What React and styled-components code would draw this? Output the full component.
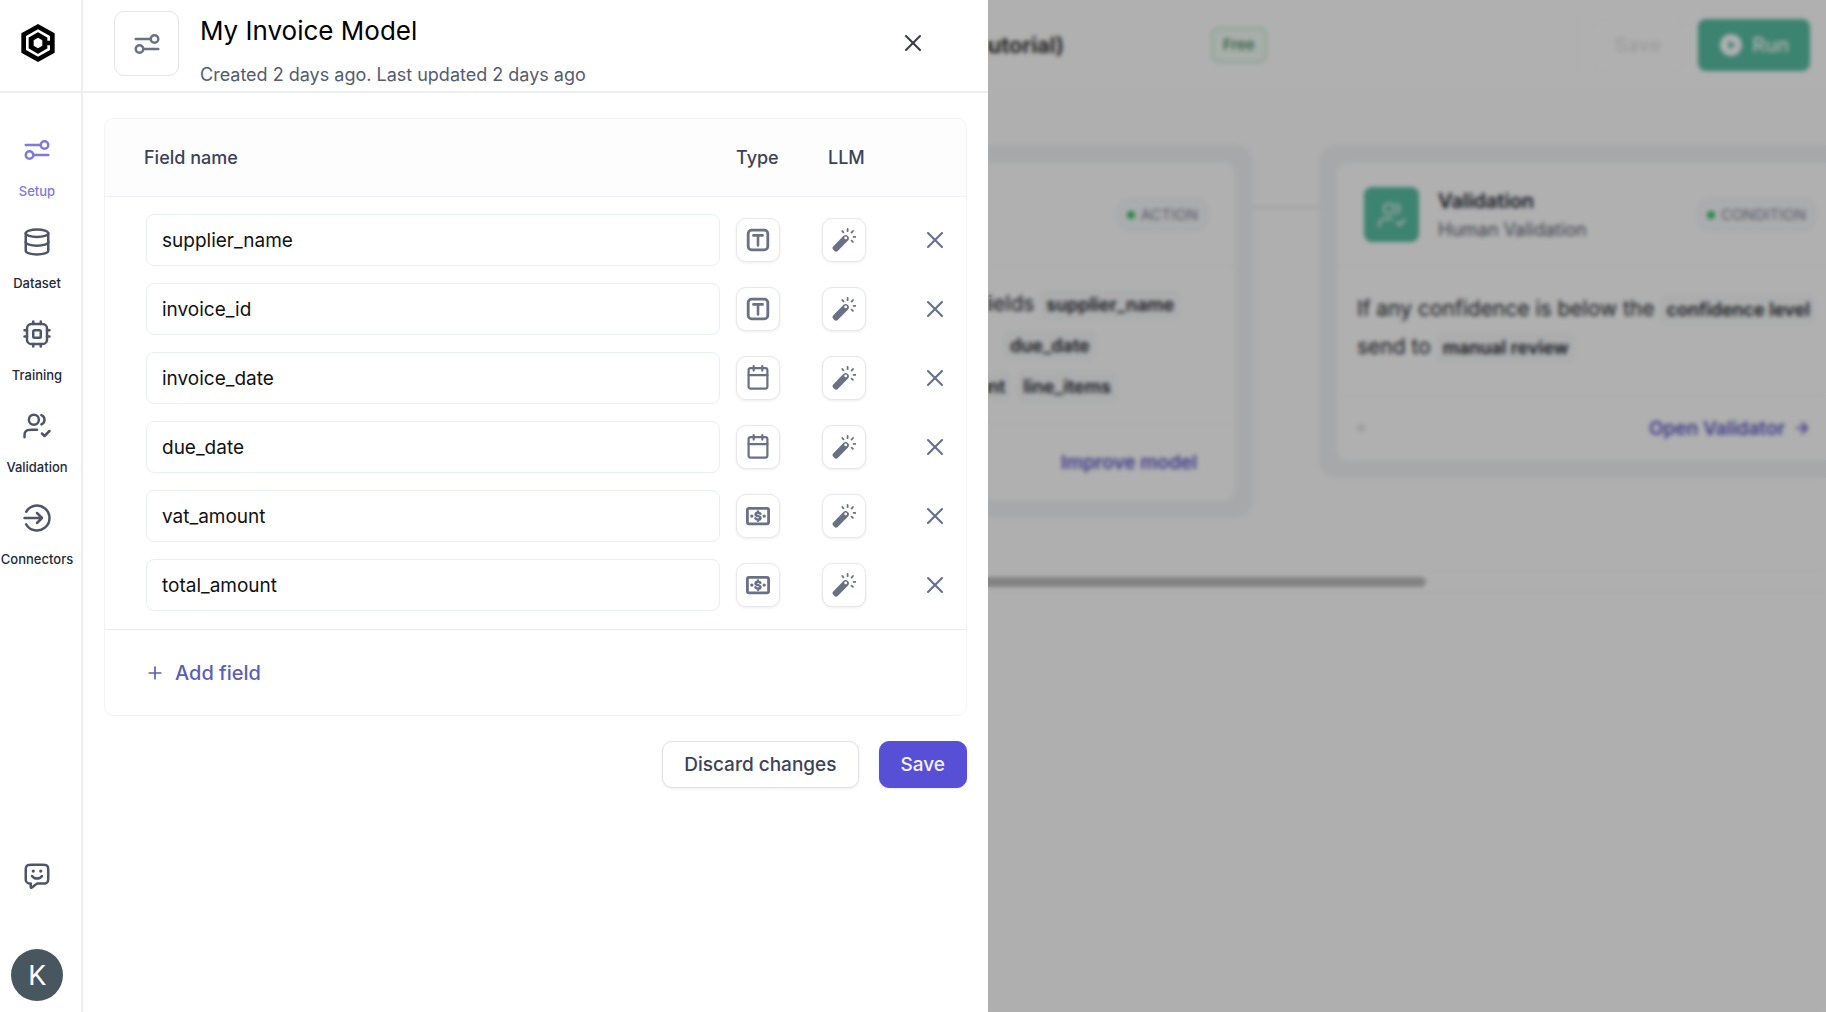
import { useState } from "react";
import styled, { createGlobalStyle } from "styled-components";
import { X, Plus, ArrowRight } from "lucide-react";

const NAV_ITEMS = [
  { label: "Setup", icon: "sliders", active: true },
  { label: "Dataset", icon: "database" },
  { label: "Training", icon: "chip" },
  { label: "Validation", icon: "users" },
  { label: "Connectors", icon: "login" },
];

const FIELDS = [
  { name: "supplier_name", type: "text" },
  { name: "invoice_id", type: "text" },
  { name: "invoice_date", type: "date" },
  { name: "due_date", type: "date" },
  { name: "vat_amount", type: "money" },
  { name: "total_amount", type: "money" },
];

const LINE_ICONS = {
  sliders: (
    <>
      <path d="M3 8h12M9 16h12" />
      <circle cx="18" cy="8" r="3" />
      <circle cx="6" cy="16" r="3" />
    </>
  ),
  database: (
    <>
      <ellipse cx="12" cy="5" rx="9" ry="3" />
      <path d="M3 5v14c0 1.66 4 3 9 3s9-1.34 9-3V5" />
      <path d="M21 12c0 1.66-4 3-9 3s-9-1.34-9-3" />
    </>
  ),
  chip: (
    <>
      <rect x="4" y="4" width="16" height="16" rx="3.5" />
      <rect x="9" y="9" width="6" height="6" rx="1" />
      <path d="M9 2v2M15 2v2M9 20v2M15 20v2M20 9h2M20 14h2M2 9h2M2 14h2" />
    </>
  ),
  users: (
    <>
      <path d="M16 18l2 2 4-4" />
      <path d="M12 15H8c-1.86 0-2.8 0-3.53.3a4 4 0 0 0-2.17 2.17C2 18.2 2 19.14 2 21" />
      <path d="M15.5 3.29a4 4 0 0 1 0 7.42" />
      <circle cx="9.5" cy="7" r="4" />
    </>
  ),
  login: (
    <>
      <path d="M12 8l4 4-4 4M16 12H2" />
      <path d="M3.34 7a10 10 0 1 1 0 10" />
    </>
  ),
  feedback: (
    <>
      <path d="M7 18v2.34c0 .53 0 .8.11.93.1.12.24.19.39.19.18 0 .38-.17.8-.5l2.39-1.9c.48-.4.73-.6 1-.73.24-.13.5-.22.76-.27.3-.06.61-.06 1.23-.06h2.52c1.68 0 2.52 0 3.16-.33a3 3 0 0 0 1.31-1.31c.33-.64.33-1.48.33-3.16V7.8c0-1.68 0-2.52-.33-3.16a3 3 0 0 0-1.31-1.31C18.72 3 17.88 3 16.2 3H7.8c-1.68 0-2.52 0-3.16.33a3 3 0 0 0-1.31 1.31C3 5.28 3 6.12 3 7.8V14c0 .93 0 1.4.1 1.78a3 3 0 0 0 2.12 2.12c.38.1.85.1 1.78.1z" />
      <path d="M8 12s1.3 2 4 2 4-2 4-2" />
      <path d="M9 8h.01M15 8h.01" strokeWidth="2.6" />
    </>
  ),
};

const LineIcon = ({ name, size = 30 }) => (
  <svg
    width={size}
    height={size}
    viewBox="0 0 24 24"
    fill="none"
    stroke="currentColor"
    strokeWidth="2"
    strokeLinecap="round"
    strokeLinejoin="round"
    aria-hidden="true"
  >
    {LINE_ICONS[name]}
  </svg>
);

const TYPE_ICONS = {
  text: (
    <>
      <rect x="4.2" y="4.2" width="19.6" height="19.6" rx="3.4" strokeWidth="2.8" />
      <path d="M9.4 9.4h9.2M14 9.4v10" strokeWidth="2.6" />
    </>
  ),
  date: (
    <>
      <rect x="4.6" y="4.2" width="18.8" height="20.4" rx="2" strokeWidth="2.2" />
      <path d="M4.6 11.2h18.8M9.7 2.2v4.4M18.3 2.2v4.4" strokeWidth="2.2" />
    </>
  ),
  money: (
    <>
      <rect x="3.4" y="6.4" width="21.2" height="15.4" rx="1.6" strokeWidth="2.8" />
      <path
        d="M16.4 11.7c-.5-.7-1.4-1-2.4-1-1.4 0-2.4.6-2.4 1.7 0 2.4 4.9 1.100 4.9 3.500 0 1.100-1.100 1.700-2.500 1.700-1.100 0-2.100-.4-2.600-1.200M14 9.600v1.100M14 17.600v1.100"
        strokeWidth="2.5"
      />
      <path d="M7.800 14.100h.01M20.200 14.100h.01" strokeWidth="3.400" />
    </>
  ),
};

const TypeIcon = ({ type }) => (
  <svg
    width="28"
    height="28"
    viewBox="0 0 28 28"
    fill="none"
    stroke="currentColor"
    strokeLinecap="round"
    strokeLinejoin="round"
    aria-hidden="true"
  >
    {TYPE_ICONS[type]}
  </svg>
);

const WandIcon = () => (
  <svg width="24" height="24" viewBox="0 0 24 24" fill="none" aria-hidden="true">
    <path
      d="M1.200 18.500L11.600 7.700a3.300 3.300 0 0 1 4.700 4.500L5.700 23a2.400 2.400 0 0 1-3.300-.1l-1.100-1.100a2.400 2.400 0 0 1-.1-3.300z"
      fill="currentColor"
    />
    <circle cx="13.700" cy="9.900" r="1.400" fill="white" />
    <path
      d="M15.600 1v2.200M10.300 3l1.100 1.400M21 3l-1.400 1.600M21.600 8.900h1.800M19.600 12.600l1.300 1.200"
      stroke="currentColor"
      strokeWidth="1.800"
      strokeLinecap="round"
    />
  </svg>
);

const Logo = () => (
  <svg width="34" height="38" viewBox="0 0 100 114" aria-hidden="true">
    <path d="M50 0l50 28v58l-50 28L0 86V28z" fill="black" />
    <path
      d="M82 50V38.500L50 20 18 38.500v37L50 94l32-18.500V64"
      fill="none"
      stroke="white"
      strokeWidth="8"
    />
    <path d="M50 41l13 8v16l-13 8-13-8V49z" fill="white" />
  </svg>
);

const PlayIcon = () => (
  <svg width="24" height="24" viewBox="0 0 24 24" aria-hidden="true">
    <circle cx="12" cy="12" r="11" fill="white" />
    <path d="M9.500 7.500l7 4.500-7 4.500z" fill="#58bea2" />
  </svg>
);

const Sidebar = () => (
  <Aside>
    <LogoLink href="#" aria-label="Home">
      <Logo />
    </LogoLink>
    <Nav>
      {NAV_ITEMS.map((item) => (
        <NavLink key={item.label} href="#" $active={item.active}>
          <LineIcon name={item.icon} />
          <span>{item.label}</span>
        </NavLink>
      ))}
    </Nav>
    <SidebarFooter>
      <GhostButton aria-label="Send feedback">
        <LineIcon name="feedback" />
      </GhostButton>
      <Avatar aria-label="Account">K</Avatar>
    </SidebarFooter>
  </Aside>
);

const FieldRow = ({ field, onRename, onRemove }) => (
  <tr>
    <td>
      <FieldInput
        aria-label="Field name"
        value={field.name}
        onChange={(e) => onRename(e.target.value)}
      />
    </td>
    <td>
      <TileButton aria-label={`Type: ${field.type}`}>
        <TypeIcon type={field.type} />
      </TileButton>
    </td>
    <td>
      <TileButton aria-label="LLM prompt">
        <WandIcon />
      </TileButton>
    </td>
    <td>
      <RemoveButton aria-label="Remove field" onClick={onRemove}>
        <X size={28} strokeWidth={1.8} />
      </RemoveButton>
    </td>
  </tr>
);

const ModelDrawer = () => {
  const [fields, setFields] = useState(FIELDS);

  const rename = (index, name) =>
    setFields(fields.map((f, i) => (i === index ? { ...f, name } : f)));
  const remove = (index) => setFields(fields.filter((_, i) => i !== index));
  const add = () => setFields([...fields, { name: "", type: "text" }]);

  return (
    <Drawer>
      <DrawerHeader>
        <HeaderTile>
          <LineIcon name="sliders" />
        </HeaderTile>
        <HeaderText>
          <h1>My Invoice Model</h1>
          <p>Created 2 days ago. Last updated 2 days ago</p>
        </HeaderText>
        <CloseButton aria-label="Close">
          <X size={28} strokeWidth={1.8} />
        </CloseButton>
      </DrawerHeader>
      <DrawerBody>
        <TableCard>
          <FieldTable>
            <colgroup>
              <col />
              <col width="86" />
              <col width="84" />
              <col width="60" />
            </colgroup>
            <thead>
              <tr>
                <th>Field name</th>
                <th>Type</th>
                <th>LLM</th>
                <th aria-label="Remove" />
              </tr>
            </thead>
            <tbody>
              {fields.map((field, i) => (
                <FieldRow
                  key={i}
                  field={field}
                  onRename={(name) => rename(i, name)}
                  onRemove={() => remove(i)}
                />
              ))}
            </tbody>
          </FieldTable>
          <TableFooter>
            <AddButton onClick={add}>
              <Plus size={20} strokeWidth={2} />
              Add field
            </AddButton>
          </TableFooter>
        </TableCard>
        <Actions>
          <Button onClick={() => setFields(FIELDS)}>Discard changes</Button>
          <Button $primary>Save</Button>
        </Actions>
      </DrawerBody>
    </Drawer>
  );
};

const Workspace = () => (
  <Main>
    <TopBar>
      <ProjectName>utorial)</ProjectName>
      <FreeBadge>Free</FreeBadge>
      <Spacer />
      <Divider />
      <SaveButton disabled>Save</SaveButton>
      <RunButton>
        <PlayIcon />
        Run
      </RunButton>
    </TopBar>
    <Canvas>
      <StepFrame $tail>
        <StepCard $tail>
          <StepHeader>
            <StatusBadge>ACTION</StatusBadge>
          </StepHeader>
          <StepBody $tail>
            <Line>
              ields <Chip>supplier_name</Chip>
            </Line>
            <Line $indent>
              <Chip>due_date</Chip>
            </Line>
            <Line>
              <Chip $tail>nt</Chip> <Chip>line_items</Chip>
            </Line>
          </StepBody>
          <StepFooter $tail>
            <StepLink href="#">Improve model</StepLink>
          </StepFooter>
        </StepCard>
      </StepFrame>
      <Connector />
      <StepFrame>
        <StepCard>
          <StepHeader>
            <StepTile>
              <LineIcon name="users" />
            </StepTile>
            <StepTitle>
              <h2>Validation</h2>
              <p>Human Validation</p>
            </StepTitle>
            <StatusBadge>CONDITION</StatusBadge>
          </StepHeader>
          <StepBody>
            <Line>
              If any confidence is below the <Chip>confidence level</Chip>
            </Line>
            <Line>
              send to <Chip>manual review</Chip>
            </Line>
          </StepBody>
          <StepFooter>
            <IdleDot />
            <StepLink href="#">
              Open Validator
              <ArrowRight size={18} strokeWidth={2.4} />
            </StepLink>
          </StepFooter>
        </StepCard>
      </StepFrame>
    </Canvas>
    <ScrollTrack>
      <ScrollThumb />
    </ScrollTrack>
    <Backdrop />
  </Main>
);

const App = () => (
  <>
    <GlobalStyle />
    <Shell>
      <Sidebar />
      <ModelDrawer />
      <Workspace />
    </Shell>
  </>
);

const GlobalStyle = createGlobalStyle`
  * {
    box-sizing: border-box;
  }

  body {
    margin: 0;
    font-family: Inter, "Liberation Sans", sans-serif;
    color: #000;
    background: #fff;
  }

  h1, h2, p {
    margin: 0;
  }

  a {
    text-decoration: none;
  }

  button, input {
    font-family: inherit;
  }

  button {
    cursor: pointer;
  }

  svg {
    display: block;
    flex-shrink: 0;
  }
`;

const Shell = styled.div`
  display: flex;
  min-height: 100vh;
  overflow: hidden;
`;

const Aside = styled.aside`
  display: flex;
  flex-direction: column;
  flex: 0 0 83px;
  border-right: 2px solid #eceef1;
`;

const LogoLink = styled.a`
  display: flex;
  align-items: center;
  justify-content: center;
  height: 93px;
  padding: 0 6px 6px 0;
  border-bottom: 2px solid #eceef1;
`;

const Nav = styled.nav`
  display: flex;
  flex-direction: column;
  gap: 20px;
  padding: 42px 7px 0 0;
`;

const NavLink = styled.a`
  display: flex;
  flex-direction: column;
  align-items: center;
  gap: 18px;
  height: 72px;
  color: ${(props) => (props.$active ? "#8079dc" : "#4d5567")};

  span {
    color: ${(props) => (props.$active ? "#8079dc" : "#242a3a")};
    font-size: 13px;
    font-weight: 500;
    line-height: 16px;
  }
`;

const SidebarFooter = styled.div`
  display: flex;
  flex-direction: column;
  align-items: center;
  gap: 58px;
  margin-top: auto;
  padding: 0 7px 11px 0;
`;

const GhostButton = styled.button`
  display: flex;
  padding: 0;
  border: none;
  background: none;
  color: #4d5567;
`;

const Avatar = styled.button`
  width: 52px;
  height: 52px;
  padding: 0;
  border: none;
  border-radius: 50%;
  background: #48575f;
  color: #fff;
  font-family: Roboto, sans-serif;
  font-size: 28px;
`;

const Drawer = styled.section`
  flex: 0 1 905px;
  min-width: 0;
  background: #fff;
`;

const DrawerHeader = styled.header`
  display: flex;
  align-items: flex-start;
  height: 93px;
  padding: 11px 61px 0 31px;
  border-bottom: 2px solid #eceef1;
`;

const HeaderTile = styled.div`
  display: flex;
  align-items: center;
  justify-content: center;
  width: 65px;
  height: 65px;
  border: 1px solid #e4e6ea;
  border-radius: 10px;
  color: #6a7185;
`;

const HeaderText = styled.div`
  flex: 1;
  padding-left: 21px;

  h1 {
    font-size: 26px;
    font-weight: 400;
    line-height: 40px;
  }

  p {
    margin-top: 12px;
    color: #555b70;
    font-size: 18px;
    line-height: 24px;
  }
`;

const CloseButton = styled(GhostButton)`
  margin-top: 18px;
  color: #3c3f46;
`;

const DrawerBody = styled.div`
  padding: 25px 21px;
`;

const TableCard = styled.div`
  border: 1px solid #f0f2f5;
  border-radius: 10px;
  overflow: hidden;
`;

const FieldTable = styled.table`
  width: 100%;
  table-layout: fixed;
  border-collapse: separate;
  border-spacing: 0;

  th {
    height: 78px;
    padding: 0;
    border-bottom: 1px solid #eef0f4;
    background: #fdfdfe;
    color: #3c4356;
    font-size: 18px;
    font-weight: 500;
    text-align: left;
  }

  th:first-child {
    padding-left: 39px;
  }

  th:nth-child(3) {
    padding-left: 6px;
  }

  td {
    padding: 17px 0 0;
  }

  td:first-child {
    padding-left: 41px;
    padding-right: 16px;
  }

  tbody tr:last-child td {
    padding-bottom: 18px;
  }
`;

const FieldInput = styled.input`
  display: block;
  width: 100%;
  height: 52px;
  padding: 0 15px;
  border: 1px solid #eceef5;
  border-radius: 8px;
  color: #111;
  font-size: 19px;
`;

const TileButton = styled.button`
  display: flex;
  align-items: center;
  justify-content: center;
  width: 44px;
  height: 44px;
  padding: 0;
  border: 1px solid #e6e8ec;
  border-radius: 10px;
  background: #fff;
  box-shadow: 0 1px 3px rgba(16, 24, 40, 0.08);
  color: #6a7185;
`;

const RemoveButton = styled(GhostButton)`
  margin-left: 15px;
  color: #66708a;
`;

const TableFooter = styled.div`
  display: flex;
  align-items: center;
  height: 86px;
  padding-left: 40px;
  border-top: 1px solid #e9ecef;
`;

const AddButton = styled(GhostButton)`
  align-items: center;
  gap: 10px;
  color: #5a5fb3;
  font-size: 20px;
  font-weight: 500;
`;

const Actions = styled.div`
  display: flex;
  justify-content: flex-end;
  gap: 20px;
  padding-top: 25px;
`;

const Button = styled.button`
  height: 47px;
  padding: 0 21px;
  border: 1px solid ${(props) => (props.$primary ? "#5750d6" : "#dfe1e6")};
  border-radius: 10px;
  background: ${(props) => (props.$primary ? "#5750d6" : "#fff")};
  box-shadow: 0 1px 3px rgba(16, 24, 40, 0.08);
  color: ${(props) => (props.$primary ? "#f3f2ff" : "#3c4356")};
  font-size: 19px;
  font-weight: 500;
`;

const Main = styled.main`
  position: relative;
  flex: 1;
  min-width: 0;
  overflow: hidden;
  background: #fefefe;
`;

const Backdrop = styled.div`
  position: absolute;
  inset: 0;
  background: rgba(0, 0, 0, 0.31);
  backdrop-filter: blur(2px);
`;

const TopBar = styled.header`
  display: flex;
  align-items: center;
  height: 91px;
  padding-right: 16px;
  border-bottom: 1px solid #fafafa;
  background: #fff;
`;

const ProjectName = styled.div`
  width: 223px;
  color: #1c1c1c;
  font-size: 22px;
  font-weight: 600;
`;

const FreeBadge = styled.span`
  padding: 0 10px;
  border: 2px solid #cbeed8;
  border-radius: 8px;
  background: #f3fcf6;
  color: #3d8458;
  font-size: 15px;
  font-weight: 500;
  line-height: 32px;
`;

const Spacer = styled.div`
  flex: 1;
`;

const Divider = styled.div`
  width: 1px;
  height: 60px;
  margin-right: 15px;
  background: #fafafa;
`;

const SaveButton = styled.button`
  width: 90px;
  height: 52px;
  margin-right: 15px;
  border: 1px solid #fcfcfc;
  border-radius: 8px;
  background: #fff;
  color: #e2e3e5;
  font-size: 20px;
  font-weight: 500;
`;

const RunButton = styled.button`
  display: flex;
  align-items: center;
  gap: 9px;
  height: 52px;
  padding: 0 21px;
  border: none;
  border-radius: 8px;
  background: #58bea2;
  color: #fff;
  font-size: 20px;
  font-weight: 500;
`;

const Canvas = styled.div`
  display: flex;
  align-items: flex-start;
  width: max-content;
  padding-top: 54px;
`;

const StepFrame = styled.section`
  padding: ${(props) => (props.$tail ? "18px 18px 18px 0" : "18px")};
  border-radius: ${(props) => (props.$tail ? "0 16px 16px 0" : "16px")};
  background: #f1f4f7;
`;

const StepCard = styled.div`
  width: ${(props) => (props.$tail ? "247px" : "506px")};
  border-radius: ${(props) => (props.$tail ? "0 10px 10px 0" : "10px")};
  background: #fff;
`;

const StepHeader = styled.div`
  display: flex;
  align-items: center;
  height: 104px;
  padding: 0 27px;
  border-bottom: 1px solid #f8f9fa;
`;

const StepTile = styled.div`
  display: flex;
  align-items: center;
  justify-content: center;
  width: 55px;
  height: 55px;
  border-radius: 8px;
  background: #58bea2;
  color: #d8efe8;
`;

const StepTitle = styled.div`
  padding-left: 19px;

  h2 {
    color: #1d2130;
    font-size: 20px;
    font-weight: 600;
    line-height: 30px;
  }

  p {
    color: #5c6273;
    font-size: 18px;
    line-height: 28px;
  }
`;

const StatusBadge = styled.span`
  display: flex;
  align-items: center;
  gap: 6px;
  margin-left: auto;
  padding: 0 9px;
  border: 1px solid #eceef2;
  border-radius: 12px;
  background: #f8f9fb;
  color: #80869a;
  font-size: 15px;
  line-height: 30px;

  &::before {
    content: "";
    width: 8px;
    height: 8px;
    border-radius: 50%;
    background: #34c465;
  }
`;

const StepBody = styled.div`
  height: ${(props) => (props.$tail ? "157px" : "129px")};
  padding: ${(props) => (props.$tail ? "17px 0 0" : "23px 20px 0")};
  border-bottom: 1px solid #fafbfc;
  line-height: ${(props) => (props.$tail ? "40px" : "37px")};
`;

const Line = styled.p`
  padding-left: ${(props) => (props.$indent ? "16px" : "0")};
  color: #22242b;
  font-size: 21px;
  white-space: nowrap;
`;

const Chip = styled.span`
  padding: 4px 6px;
  padding-left: ${(props) => (props.$tail ? "0" : "6px")};
  border-radius: 6px;
  background: #f9fafb;
  font-size: 18px;
  font-weight: 600;
`;

const StepFooter = styled.div`
  display: flex;
  align-items: center;
  height: ${(props) => (props.$tail ? "76px" : "64px")};
  padding-left: 20px;
  padding-right: ${(props) => (props.$tail ? "38px" : "32px")};
`;

const StepLink = styled.a`
  display: flex;
  align-items: center;
  gap: 8px;
  margin-left: auto;
  color: #6258c8;
  font-size: 19px;
  font-weight: 600;
`;

const IdleDot = styled.span`
  width: 8px;
  height: 8px;
  border-radius: 50%;
  background: #dfe8e4;
`;

const Connector = styled.div`
  width: 66px;
  height: 4px;
  margin-top: 60px;
  background: #eef0f3;
`;

const ScrollTrack = styled.div`
  margin-top: 53px;
  padding: 5px 0;
  border-top: 1px solid #fafafa;
  border-bottom: 1px solid #fafafa;
`;

const ScrollThumb = styled.div`
  width: 438px;
  height: 10px;
  border-radius: 0 5px 5px 0;
  background: #bdbdbd;
`;

export default App;
